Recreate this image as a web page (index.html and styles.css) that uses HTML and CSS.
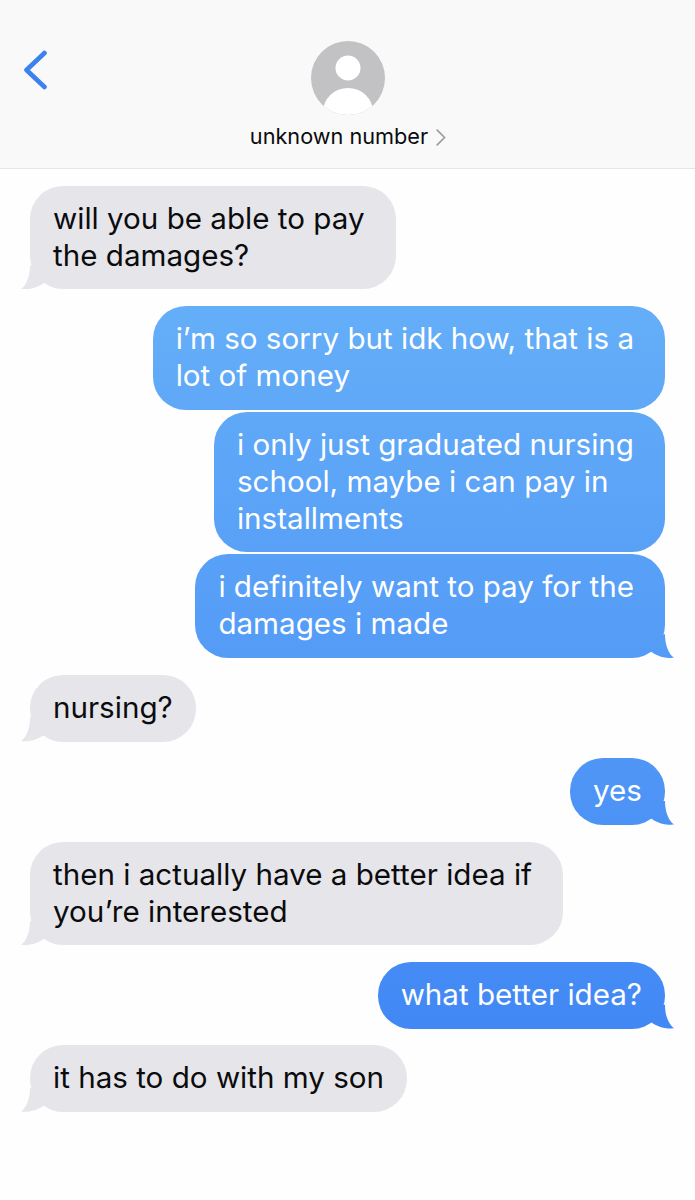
FILE: index.html
```html
<!DOCTYPE html>
<html lang="en">
<head>
  <meta charset="UTF-8">
  <title>unknown number</title>
  <link rel="stylesheet" href="styles.css">
</head>
<body>
  <header class="top">
    <svg class="back" width="24" height="40" viewBox="0 0 24 40">
      <path d="M21.5 3 L3.5 20 L21.5 37" fill="none" stroke="#3b82f1" stroke-width="4.6" stroke-linecap="round" stroke-linejoin="round"/>
    </svg>
    <svg class="avatar" width="74" height="74" viewBox="0 0 74 74">
      <defs><clipPath id="disc"><circle cx="37" cy="37" r="37"/></clipPath></defs>
      <circle cx="37" cy="37" r="37" fill="#c2c2c4"/>
      <circle cx="37" cy="27" r="12.5" fill="#fff"/>
      <ellipse cx="37" cy="71" rx="25" ry="24" fill="#fff" clip-path="url(#disc)"/>
    </svg>
    <div class="contact">
      <span>unknown number</span>
      <svg width="10" height="17" viewBox="0 0 10 17">
        <path d="M1.2 1.2 L8.6 8.5 L1.2 15.8" fill="none" stroke="#9b9b9f" stroke-width="1.7" stroke-linecap="round" stroke-linejoin="round"/>
      </svg>
    </div>
  </header>

  <main class="thread">
    <div class="bubble wrapped in tail">will you be able to pay<br>the damages?</div>

    <div class="group">
      <div class="bubble wrapped out">i’m so sorry but idk how, that is a<br>lot of money</div>
      <div class="bubble wrapped out">i only just graduated nursing<br>school, maybe i can pay in<br>installments</div>
      <div class="bubble wrapped out tail">i definitely want to pay for the<br>damages i made</div>
    </div>

    <div class="bubble in tail">nursing?</div>
    <div class="bubble out tail">yes</div>
    <div class="bubble wrapped in tail">then i actually have a better idea if<br>you’re interested</div>
    <div class="bubble out tail">what better idea?</div>
    <div class="bubble in tail">it has to do with my son</div>
  </main>
</body>
</html>
```

FILE: styles.css
```css
* {
  box-sizing: border-box;
}

body {
  margin: 0;
  min-height: 1200px;
  background: #fefefe;
  font-family: Inter, "Noto Sans", sans-serif;
  color: #0b0b0d;
}

.top {
  height: 169px;
  position: relative;
  display: flex;
  flex-direction: column;
  align-items: center;
  padding-top: 41px;
  background: #f9f9f9;
  border-bottom: 1px solid #e6e6e8;
}

.back {
  position: absolute;
  left: 23px;
  top: 50px;
}

.contact {
  display: flex;
  align-items: center;
  gap: 8px;
  margin-top: 8px;
  margin-left: 1px;
  font-size: 21.7px;
  line-height: 26px;
}

.contact svg {
  margin-top: 2px;
}

.thread {
  display: flex;
  flex-direction: column;
  gap: 16.7px;
  padding: 16.7px 30px 0;
}

.group {
  display: flex;
  flex-direction: column;
  gap: 2px;
}

.bubble {
  position: relative;
  width: fit-content;
  padding: 14px 23px 15.7px;
  border-radius: 33px;
  font-size: 29.6px;
  line-height: 37px;
  white-space: nowrap;
}

/* bubbles with more than one line keep some slack on the right */
.wrapped {
  padding-right: 31px;
}

.in {
  background: #e5e5ea;
}

.out {
  align-self: flex-end;
  color: #fff;
  background: linear-gradient(to bottom, #65aef8 300px, #4288f5 1030px) fixed;
}

.tail::after {
  content: "";
  position: absolute;
  bottom: 0;
  width: 30px;
  height: 30px;
  background: inherit;
}

.in.tail::after {
  left: -9px;
  clip-path: path("M9 6 C9 16 6 25 0 29.7 C8 30.2 16 28.5 22 24 L30 20 L24 6 Z");
}

.out.tail::after {
  right: -9px;
  clip-path: path("M21 6 C21 16 24 25 30 29.7 C22 30.2 14 28.5 8 24 L0 20 L6 6 Z");
}
```
